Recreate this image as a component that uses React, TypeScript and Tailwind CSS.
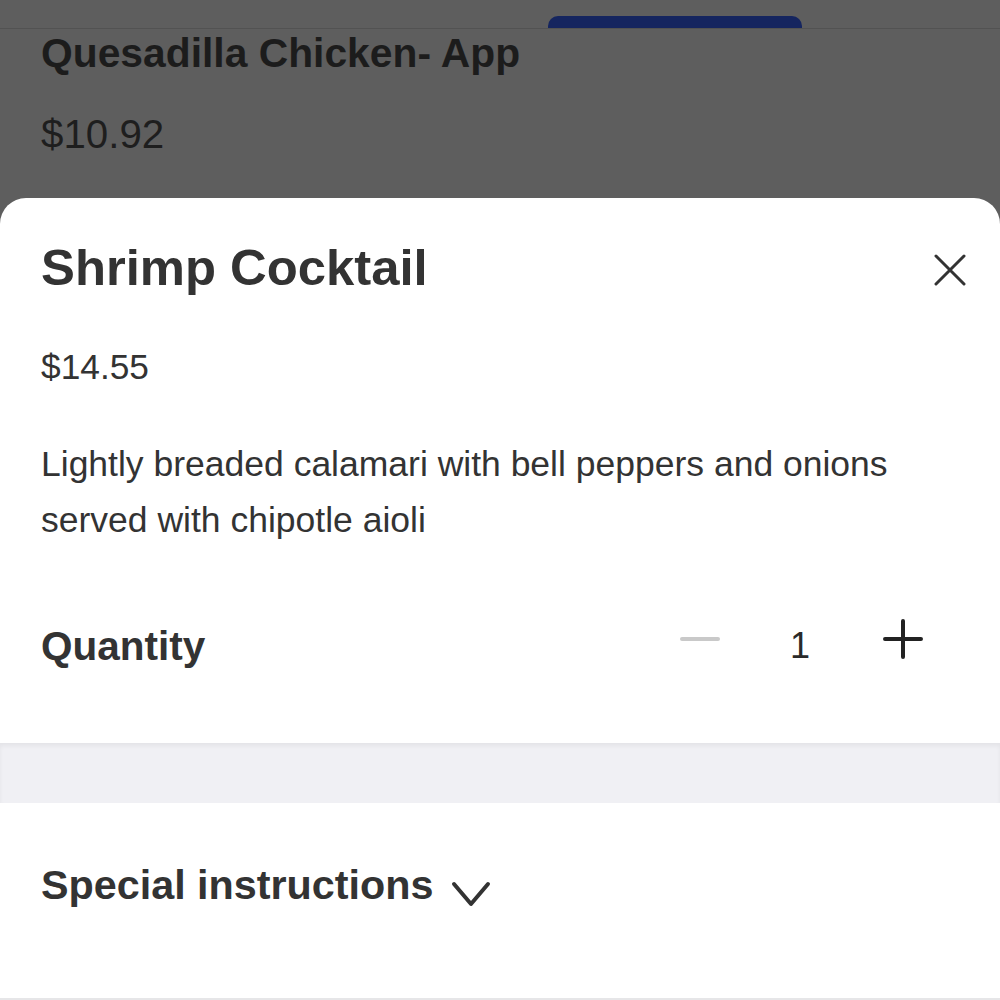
export default function App() {
  return (
    <div className="relative flex h-[1000px] w-[1000px] flex-col overflow-hidden bg-[#5e5e5e] font-['Liberation_Sans',Arial,sans-serif]">
      {/* page behind the sheet, dimmed */}
      <div className="flex h-[29px] items-end border-b border-[#525252]">
        <div className="ml-[548px] h-[12px] w-[254px] rounded-t-[10px] bg-[#15255f]" />
      </div>
      <div className="pl-[41px] text-[40.8px] font-bold leading-[48px] text-[#1c1c1c]">Quesadilla Chicken- App</div>
      <div className="mt-[34px] pl-[41px] text-[40.3px] leading-[48px] text-[#1e1e1e]">$10.92</div>

      {/* bottom sheet */}
      <div className="mt-[39px] flex flex-1 flex-col rounded-t-[26px] bg-white text-[#333333]">
        <div className="flex items-start justify-between pl-[41px] pr-[34px] pt-[40px]">
          <h1 className="text-[50.8px] font-bold leading-[60px]">Shrimp Cocktail</h1>
          <svg width="32" height="32" viewBox="0 0 32 32" className="mt-[16px]" fill="none" stroke="#333333" strokeWidth="3" strokeLinecap="round">
            <path d="M2 2 L30 30 M30 2 L2 30" />
          </svg>
        </div>

        <div className="mt-[48px] pl-[41px] text-[35.3px] leading-[42px]">$14.55</div>

        <p className="mt-[48px] pl-[41px] pr-[41px] text-[35.5px] leading-[56px]">
          Lightly breaded calamari with bell peppers and onions served with chipotle aioli
        </p>

        <div className="mt-[74px] flex h-[48px] items-center justify-between pl-[41px] pr-[77px]">
          <span className="text-[40.5px] font-bold leading-[48px]">Quantity</span>
          <div className="flex h-[48px] items-center">
            <svg width="40" height="48" viewBox="0 0 40 48" className="overflow-visible">
              <path d="M2 17 L38 17" stroke="#c9c9c9" strokeWidth="4" strokeLinecap="round" />
            </svg>
            <span className="ml-[60px] w-[40px] text-center text-[36px] leading-[48px] text-[#2a2a2a]">1</span>
            <svg width="40" height="48" viewBox="0 0 40 48" className="ml-[63px] overflow-visible">
              <path d="M2 17 L38 17 M20 -1 L20 35" stroke="#222222" strokeWidth="4" strokeLinecap="round" />
            </svg>
          </div>
        </div>

        <div className="mt-[73px] h-[60px] bg-[#f0f0f4] shadow-[inset_0_3px_4px_rgba(0,0,0,0.05)]" />

        <div className="mt-[58px] flex h-[48px] items-center pl-[41px]">
          <span className="text-[41.3px] font-bold leading-[48px]">Special instructions</span>
          <svg width="40" height="26" viewBox="0 0 40 26" className="ml-[18px] mt-[18px]" fill="none" stroke="#333333" strokeWidth="4" strokeLinecap="round" strokeLinejoin="round">
            <path d="M3 3 L20 23 L37 3" />
          </svg>
        </div>

        <div className="mt-auto h-[2px] bg-[#e6e6e8]" />
      </div>
    </div>
  )
}
